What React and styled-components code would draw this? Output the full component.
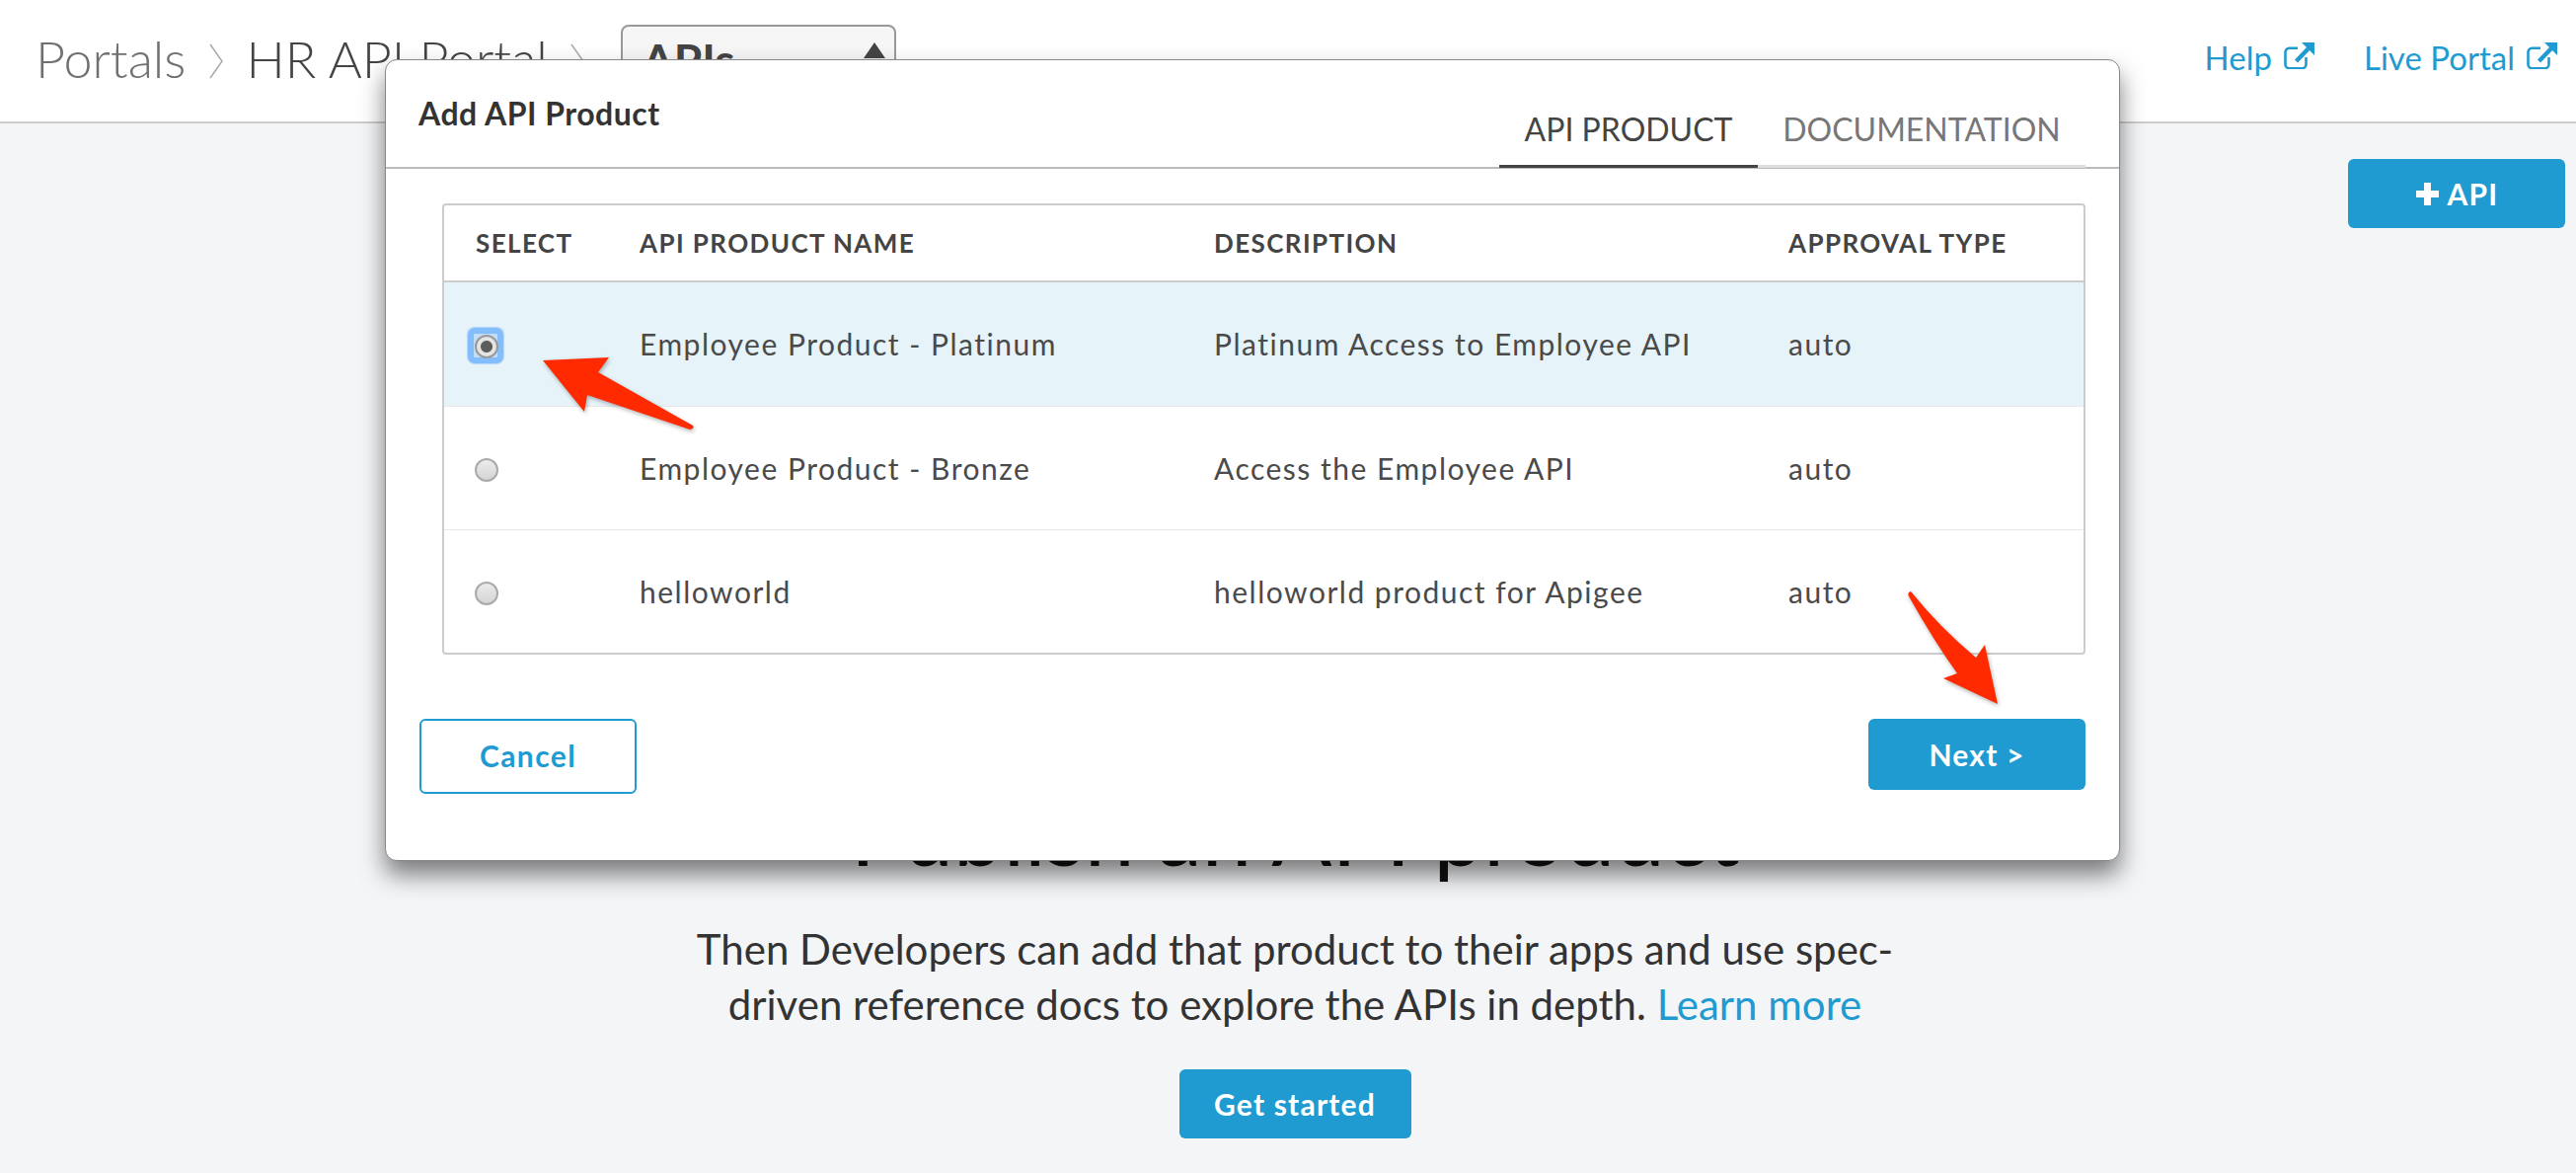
import React from "react";
import styled, { createGlobalStyle } from "styled-components";

const blue = "#1f9bd1";

const Global = createGlobalStyle`
  html, body {
    margin: 0;
    padding: 0;
    width: 2610px;
    height: 1188px;
    overflow: hidden;
    background: #f4f5f7;
    font-family: Lato, "Open Sans", sans-serif;
  }
  * { box-sizing: border-box; }
`;

const Page = styled.div`
  position: relative;
  width: 2610px;
  height: 1188px;
  overflow: hidden;
`;

const TopBar = styled.header`
  display: flex;
  align-items: center;
  justify-content: space-between;
  height: 125px;
  padding: 0 19px 0 36px;
  background: #fff;
  border-bottom: 2px solid #ccc;
`;

const Crumbs = styled.nav`
  display: flex;
  align-items: center;
  align-self: stretch;
  padding-bottom: 6px;
`;

const Crumb = styled.span`
  font-size: 52px;
  font-weight: 300;
  color: ${(p) => p.$color || "#444"};
`;

const Sep = styled.svg`
  width: 16px;
  height: 36px;
  margin: 6px 22.5px 0;
  fill: none;
  stroke: #aaa;
  stroke-width: 1.5;
`;

const Select = styled.div`
  display: flex;
  justify-content: space-between;
  align-self: flex-start;
  width: 279px;
  height: 80px;
  margin: 25px 0 0 13px;
  padding: 6px 9px 0 20px;
  border: 2px solid #999;
  border-radius: 8px;
  background: #f6f6f6;
  font-size: 46px;
  font-weight: 700;
  color: #444;
`;

const Caret = styled.i`
  width: 0;
  height: 0;
  margin-top: 10px;
  border-left: 11px solid transparent;
  border-right: 11px solid transparent;
  border-bottom: 16px solid #444;
`;

const TopLinks = styled.div`
  display: flex;
  align-items: center;
  gap: 50px;
  margin-top: -8px;
`;

const TopLink = styled.a`
  display: flex;
  align-items: center;
  gap: 12px;
  font-size: 33px;
  color: ${blue};
`;

const ExtIcon = styled.svg`
  width: 31px;
  height: 27px;
  margin-top: -3px;
  fill: none;
  stroke: ${blue};
  stroke-width: 2.6;
`;

const Main = styled.main`
  display: flex;
  flex-direction: column;
  align-items: center;
  padding: 36px 11px 0 25px;
`;

const Actions = styled.div`
  align-self: flex-end;
`;

const Filled = styled.button`
  display: flex;
  align-items: center;
  justify-content: center;
  gap: 8px;
  width: ${(p) => p.$w}px;
  height: ${(p) => p.$h}px;
  padding: 0;
  border: 0;
  border-radius: 6px;
  background: ${blue};
  color: #fff;
  font-family: inherit;
  font-size: 30px;
  font-weight: 700;
  letter-spacing: 1.2px;
`;

const PlusIcon = styled.svg`
  width: 25px;
  height: 25px;
  fill: #fff;
`;

const Heading = styled.h1`
  margin: 561px 0 0;
  font-size: 90.5px;
  font-weight: 400;
  line-height: 100px;
  color: #111;
`;

const Lead = styled.p`
  width: 1302px;
  margin: 41px 0 38px;
  font-size: 42px;
  line-height: 56px;
  text-align: center;
  color: #333;
`;

const Learn = styled.a`
  color: ${blue};
`;

const Modal = styled.section`
  position: absolute;
  left: 390px;
  top: 60px;
  width: 1758px;
  height: 812px;
  background: #fff;
  border: 1px solid #888;
  border-radius: 12px;
  box-shadow: 0 14px 24px rgba(0, 0, 0, 0.5);
`;

const ModalHead = styled.div`
  display: flex;
  justify-content: space-between;
  height: 110px;
  padding: 0 34px 0 33px;
  border-bottom: 2px solid #bbb;
`;

const ModalTitle = styled.h2`
  margin: 34px 0 0;
  font-size: 32px;
  line-height: 40px;
  font-weight: 700;
  letter-spacing: 0.5px;
  color: #333;
`;

const Tabs = styled.div`
  display: flex;
  align-self: flex-end;
  margin-bottom: -1px;
`;

const Tab = styled.div`
  width: ${(p) => p.$w}px;
  height: 66px;
  line-height: 53px;
  text-align: center;
  font-size: 32px;
  color: ${(p) => (p.$active ? "#444" : "#777")};
  border-bottom: 3px solid ${(p) => (p.$active ? "#444" : "#ddd")};
`;

const Table = styled.div`
  margin: 35px 34px 0 57px;
  border: 2px solid #ccc;
  border-radius: 4px;
`;

const Row = styled.div`
  display: grid;
  grid-template-columns: 166px 582px 582px 1fr;
  align-items: center;
  height: ${(p) => p.$h || 125.5}px;
  padding-left: 32px;
  background: ${(p) => (p.$selected ? "#e6f3f9" : "transparent")};
  border-bottom: ${(p) => p.$line || "1px solid #e8e8e8"};
  &:last-child {
    height: 123.5px;
    border-bottom: 0;
  }
`;

const HeadCell = styled.div`
  font-size: 26px;
  font-weight: 700;
  letter-spacing: 1.4px;
  color: #444;
`;

const Cell = styled.div`
  font-size: 30px;
  letter-spacing: 1.5px;
  color: #4a4a4a;
`;

const Radio = styled.span`
  display: block;
  width: 24px;
  height: 24px;
  margin: 5px 0 0 -1px;
  border-radius: 50%;
  border: 2px solid #aaa;
  background: ${(p) => (p.$on ? "radial-gradient(circle, #5c5c5c 0 5.5px, #e4e4e4 6.5px)" : "linear-gradient(#ececec, #d4d4d4)")};
`;

// focus ring that sits behind the checked radio
const FocusRing = styled.span`
  position: absolute;
  left: -7px;
  top: -7px;
  width: 36px;
  height: 36px;
  border: 6px solid #84bdfb;
  border-radius: 7px;
  background: #c2ddf5;
  box-shadow: 0 0 1px 1px #b4d6fa;
`;

const Dot = styled(Radio)`
  position: absolute;
  left: 0;
  top: 0;
  margin: 0;
  border-color: #999;
`;

const Focused = styled.span`
  position: relative;
  display: block;
  width: 24px;
  height: 24px;
  margin: 5px 0 0 -1px;
`;

const ModalFoot = styled.div`
  display: flex;
  justify-content: space-between;
  align-items: flex-start;
  margin-top: 65px;
  padding: 0 34px;
`;

const Ghost = styled.button`
  width: 220px;
  height: 76px;
  padding: 0 0 2px;
  background: #fff;
  border: 2px solid ${blue};
  border-radius: 6px;
  color: ${blue};
  font-family: inherit;
  font-size: 30px;
  font-weight: 700;
  letter-spacing: 1.4px;
`;

const Arrows = styled.svg`
  position: absolute;
  left: 0;
  top: 0;
  width: 2610px;
  height: 1188px;
  pointer-events: none;
  filter: drop-shadow(1px 2px 2px rgba(0, 0, 0, 0.3));
`;

const External = () => (
  <ExtIcon viewBox="0 0 31 27">
    <path d="M14 5.8H5.5a4 4 0 0 0-4 4v12.4a4 4 0 0 0 4 4h13a4 4 0 0 0 4-4V15" />
    <path d="M12.5 19L26 5" strokeWidth="4.4" />
    <path d="M18 0h13v13z" fill="#1f9bd1" stroke="none" />
  </ExtIcon>
);

const Chevron = () => (
  <Sep viewBox="0 0 16 36">
    <path d="M2 1l12 17L2 35" />
  </Sep>
);

const products = [
  { name: "Employee Product - Platinum", desc: "Platinum Access to Employee API", selected: true },
  { name: "Employee Product - Bronze", desc: "Access the Employee API" },
  { name: "helloworld", desc: "helloworld product for Apigee" },
];

export default function App() {
  return (
    <Page>
      <Global />
      <TopBar>
        <Crumbs>
          <Crumb $color="#707070">Portals</Crumb>
          <Chevron />
          <Crumb>HR API Portal</Crumb>
          <Chevron />
          <Select>
            APIs
            <Caret />
          </Select>
        </Crumbs>
        <TopLinks>
          <TopLink>Help<External /></TopLink>
          <TopLink>Live Portal<External /></TopLink>
        </TopLinks>
      </TopBar>

      <Main>
        <Actions>
          <Filled $w={220} $h={70}>
            <PlusIcon viewBox="0 0 25 25"><path d="M9 1h7v8h8v7h-8v8H9v-8H1V9h8z" /></PlusIcon>
            API
          </Filled>
        </Actions>
        <Heading>Publish an API product</Heading>
        <Lead>
          Then Developers can add that product to their apps and use spec-driven reference docs to
          explore the APIs in depth. <Learn>Learn more</Learn>
        </Lead>
        <Filled $w={235} $h={70}>Get started</Filled>
      </Main>

      <Modal>
        <ModalHead>
          <ModalTitle>Add API Product</ModalTitle>
          <Tabs>
            <Tab $active $w={262}>API PRODUCT</Tab>
            <Tab $w={332}>DOCUMENTATION</Tab>
          </Tabs>
        </ModalHead>
        <Table>
          <Row $h={78} $line="2px solid #ccc">
            <HeadCell>SELECT</HeadCell>
            <HeadCell>API PRODUCT NAME</HeadCell>
            <HeadCell>DESCRIPTION</HeadCell>
            <HeadCell>APPROVAL TYPE</HeadCell>
          </Row>
          {products.map((p) => (
            <Row key={p.name} $selected={p.selected}>
              {p.selected ? (
                <Focused>
                  <FocusRing />
                  <Dot $on />
                </Focused>
              ) : (
                <Radio />
              )}
              <Cell>{p.name}</Cell>
              <Cell>{p.desc}</Cell>
              <Cell>auto</Cell>
            </Row>
          ))}
        </Table>
        <ModalFoot>
          <Ghost>Cancel</Ghost>
          <Filled $w={220} $h={72}>Next &gt;</Filled>
        </ModalFoot>
      </Modal>

      <Arrows viewBox="0 0 2610 1188">
        <path fill="#ff2a00" d="M550 365L617 362L606 377L702 431Q704 434 699 435L595 400L592 417Z" />
        <path fill="#ff2a00" d="M1936 599Q1932 600 1934 604Q1960 650 1983 682L1969 687L2024 713L2011 653L2002 666Q1965 635 1936 599Z" />
      </Arrows>
    </Page>
  );
}
